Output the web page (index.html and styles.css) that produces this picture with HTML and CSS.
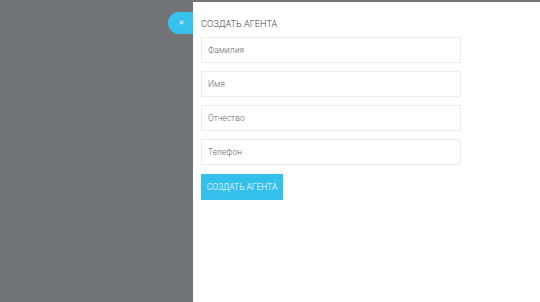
FILE: index.html
```html
<!DOCTYPE html>
<html lang="ru">
<head>
<meta charset="utf-8">
<link rel="stylesheet" href="styles.css">
</head>
<body>
<div class="page">
  <div class="overlay"></div>
  <div class="panel">
    <button class="close" type="button">&#x2715;</button>
    <div class="title">СОЗДАТЬ АГЕНТА</div>
    <form class="form">
      <input class="field" type="text" placeholder="Фамилия">
      <input class="field" type="text" placeholder="Имя">
      <input class="field" type="text" placeholder="Отчество">
      <input class="field" type="text" placeholder="Телефон">
      <button class="submit" type="button">СОЗДАТЬ АГЕНТА</button>
    </form>
  </div>
</div>
</body>
</html>
```
FILE: styles.css
```css
html, body {
  margin: 0;
  padding: 0;
  height: 100%;
}
body {
  background: #727577;
  font-family: Roboto, "Liberation Sans", Arial, sans-serif;
}
.page {
  display: flex;
  height: 100%;
  box-sizing: border-box;
  padding-top: 2px;
}
.overlay {
  width: 193px;
  flex: none;
}
.panel {
  position: relative;
  flex: 1;
  background: #fff;
  padding: 15px 8px 0 8px;
  box-sizing: border-box;
}
.close {
  position: absolute;
  left: -25px;
  top: 10px;
  width: 25px;
  height: 22px;
  border: none;
  border-radius: 11px 0 0 11px;
  background: #38c1ed;
  color: #eaf8fd;
  font-size: 7px;
  padding: 0 0 0 2px;
  line-height: 22px;
  font-family: "DejaVu Sans", sans-serif;
}
.title {
  font-size: 9.2px;
  font-weight: 300;
  line-height: 14px;
  color: #444;
  margin-bottom: 6px;
}
.form {
  display: flex;
  flex-direction: column;
  align-items: flex-start;
  gap: 8px;
}
.field {
  width: 260px;
  height: 26px;
  box-sizing: border-box;
  border: 1px solid #ececec;
  padding: 0 6px;
  font-size: 8.5px;
  font-weight: 300;
  font-family: Roboto, "Liberation Sans", Arial, sans-serif;
  outline: none;
  margin: 0;
}
.field::placeholder {
  color: #666;
}
.submit {
  margin-top: 1px;
  width: 82px;
  height: 26px;
  border: none;
  background: #35c0ec;
  color: #fff;
  font-size: 8.5px;
  font-weight: 300;
  font-family: Roboto, "Liberation Sans", Arial, sans-serif;
  padding: 0;
}
```
